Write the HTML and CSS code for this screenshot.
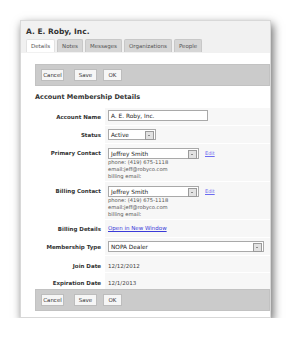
FILE: index.html
```html
<!doctype html>
<html lang="en">
<head>
  <meta charset="utf-8" />
  <title>A. E. Roby, Inc.</title>
  <link rel="stylesheet" href="styles.css">
</head>
<body>
  <div class="window">
    <div class="head">
      <div class="title">A. E. Roby, Inc.</div>
      <div class="tabs">
        <span class="tab active">Details</span>
        <span class="tab">Notes</span>
        <span class="tab">Messages</span>
        <span class="tab">Organizations</span>
        <span class="tab">People</span>
      </div>
    </div>

    <div class="body">
      <div class="toolbar">
        <button class="btn">Cancel</button>
        <button class="btn">Save</button>
        <button class="btn ok">OK</button>
      </div>

      <div class="section">Account Membership Details</div>

      <div class="form">
        <div class="row r-name">
          <div class="lbl">Account Name</div>
          <div class="val"><span class="input w-name">A. E. Roby, Inc.</span></div>
        </div>
        <div class="row">
          <div class="lbl">Status</div>
          <div class="val"><span class="select w-status">Active<i class="arr"></i></span></div>
        </div>
        <div class="row contact">
          <div class="lbl">Primary Contact</div>
          <div class="val">
            <div class="line"><span class="select w-contact">Jeffrey Smith<i class="arr"></i></span><a class="edit">Edit</a></div>
            <div class="info">phone: (419) 675-1118<br>email:jeff@robyco.com<br>billing email:</div>
          </div>
        </div>
        <div class="row contact">
          <div class="lbl">Billing Contact</div>
          <div class="val">
            <div class="line"><span class="select w-contact">Jeffrey Smith<i class="arr"></i></span><a class="edit">Edit</a></div>
            <div class="info">phone: (419) 675-1118<br>email:jeff@robyco.com<br>billing email:</div>
          </div>
        </div>
        <div class="row">
          <div class="lbl">Billing Details</div>
          <div class="val"><a class="link">Open in New Window</a></div>
        </div>
        <div class="row">
          <div class="lbl">Membership Type</div>
          <div class="val"><span class="select w-type">NOPA Dealer<i class="arr"></i></span></div>
        </div>
        <div class="row date">
          <div class="lbl">Join Date</div>
          <div class="val plain">12/12/2012</div>
        </div>
        <div class="row date">
          <div class="lbl">Expiration Date</div>
          <div class="val plain">12/1/2013</div>
        </div>
      </div>

      <div class="toolbar">
        <button class="btn">Cancel</button>
        <button class="btn">Save</button>
        <button class="btn ok">OK</button>
      </div>
    </div>
  </div>
</body>
</html>
```

FILE: styles.css
```css
html, body { margin:0; padding:0; background:#fff; }
body { font-family:"DejaVu Sans", Verdana, sans-serif; color:#333; }

.window{
  margin:20px 0 0 20px; width:251px; height:298px;
  background:#fff; border:1px solid #d8d8d8; box-sizing:border-box;
  box-shadow: 2px 4px 9px rgba(0,0,0,.6);
}
.head{ background:#f1f1f1; padding:6px 0 0 5px; height:32px; box-sizing:border-box; }
.title{ font-weight:bold; font-size:7.5px; color:#333; line-height:9px; margin-bottom:3px; }
.tabs{ display:flex; gap:2px; }
.tab{
  font-size:5.5px; color:#555; background:#d6d6d6; border:1px solid #c8c8c8; border-bottom:none;
  height:13px; line-height:13px; padding:0 4px; box-sizing:border-box; border-radius:2px 2px 0 0;
}
.tab.active{ background:#fff; border-color:#e2e2e2; }

.body{ padding:11px 0 0 14px; }
.toolbar{
  background:#cbcbcb; height:22px; display:flex; align-items:center; padding-left:5px;
  border:1px solid #c2c2c2; box-sizing:border-box;
}
.btn{
  font-family:inherit; font-size:5.5px; color:#333; background:#f6f6f6;
  border:1px solid #bdbdbd; height:12px; padding:0; margin:0 10px 0 0; width:23px;
}
.btn.ok{ width:19px; margin-left:-4px; }

.section{ font-weight:bold; font-size:6.5px; height:22px; line-height:22px; color:#333; }

.row{ display:flex; min-height:17px; border-top:1px solid #fff; }
.row:first-child{ border-top:none; }
.row.date{ min-height:16px; }
.lbl{
  width:70px; text-align:right; font-weight:bold; font-size:5.5px; color:#333;
  padding:6px 4px 0 0; box-sizing:border-box;
}
.contact .lbl{ padding-top:6px; }
.val{ flex:1; background:#f7f7f7; padding:3px 0 2px 3px; font-size:5.5px; }
.contact .val{ padding:4px 0 1px 3px; }
.val.plain{ padding-top:6px; color:#444; }
.date .lbl{ padding-top:7px; }
.date .val.plain{ padding-top:7px; }
.val a{ line-height:11px; }
.r-name .val{ padding-top:2px; }

.input, .select{
  display:inline-flex; align-items:center; height:11px; box-sizing:border-box;
  border:1px solid #a9a9a9; background:#fff; font-size:5.8px; color:#222; padding-left:2px;
  position:relative; vertical-align:top;
}
.w-name{ width:100px; }
.w-status{ width:48px; }
.w-contact{ width:91px; }
.w-type{ width:156px; }
.arr{
  position:absolute; right:1px; top:1px; width:7px; height:7px;
  background:#e2e2e2; border:1px solid #9a9a9a;
}
.arr::after{
  content:""; position:absolute; left:2px; top:3px;
  border-left:1.5px solid transparent; border-right:1.5px solid transparent; border-top:1.5px solid #333;
}
.line{ display:flex; align-items:center; }
.edit{ color:#6b6bf0; text-decoration:underline; margin-left:6px; font-size:5px; }
.info{ color:#555; line-height:7px; margin-top:0; font-size:5.2px; }
.link{ color:#3a3ad8; text-decoration:underline; }
```
